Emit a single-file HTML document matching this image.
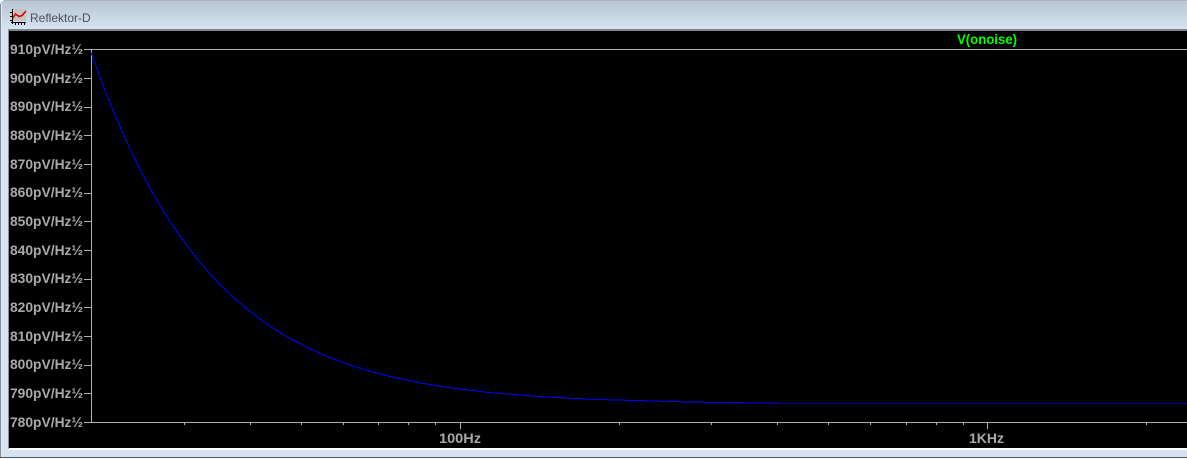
<!DOCTYPE html>
<html>
<head>
<meta charset="utf-8">
<style>
html,body{margin:0;padding:0;background:#fff;}
#w{position:relative;width:1187px;height:459px;overflow:hidden;background:#fff;font-family:"Liberation Sans",sans-serif;}
#frame{position:absolute;left:0;top:0;width:1187px;height:458px;border-top-left-radius:5px;background:linear-gradient(#b9c7d5 0,#c3d0dd 12px,#d6e3f1 29px,#d6e3f1 100%);}
#edge{position:absolute;left:0;top:4px;width:1px;height:454px;background:#7f8a94;}
#edge2{position:absolute;left:4px;top:0;width:1183px;height:1px;background:#aab4be;}
#edge3{position:absolute;left:1px;top:4px;width:1px;height:453px;background:#e4edf5;}
#bot{position:absolute;left:0;top:457px;width:1187px;height:1px;background:#555;}
#cl{position:absolute;left:8px;top:29px;width:1179px;height:421px;background:#fff;}
#cl2{position:absolute;left:8px;top:29px;width:1179px;height:2px;background:#7d848b;}
#cl3{position:absolute;left:8px;top:29px;width:1px;height:420px;background:#8c9399;}
#plot{position:absolute;left:9px;top:31px;width:1178px;height:417px;background:#000;}
#title{position:absolute;left:30px;top:11px;font-size:12px;line-height:14px;color:#47505c;}
svg{position:absolute;left:0;top:0;}
</style>
</head>
<body>
<div id="w">
<div id="frame"></div><div id="edge"></div><div id="edge2"></div><div id="edge3"></div><div id="bot"></div>
<div id="cl"></div><div id="plot"></div><div id="cl2"></div><div id="cl3"></div>
<div id="title">Reflektor-D</div>
<svg width="1187" height="459" viewBox="0 0 1187 459">
<g shape-rendering="crispEdges">
<rect x="13" y="9" width="13" height="12" fill="#c4c4c4"/>
<path d="M12.5 9v15M10 12.5h2M10 16.5h2M10 20.5h2M11 22.5h15M15.5 22v3M18.5 22v3M21.5 22v3M24.5 22v3" stroke="#000" fill="none"/>
</g>
<path d="M13 18L15.5 14L19 16.5L22 15.5L26 11" stroke="#e00000" stroke-width="1.6" fill="none"/>
<g shape-rendering="crispEdges" stroke="#b0b0b0" fill="none">
<path d="M91.5 49.5V422.5M84 49.5H1187M84 422.5H1187"/>
<path d="M84 78.5H91M84 107.5H91M84 135.5H91M84 164.5H91M84 193.5H91M84 221.5H91M84 250.5H91M84 279.5H91M84 307.5H91M84 336.5H91M84 365.5H91M84 393.5H91"/>
<path d="M184.5 422V425M250.5 422V425M301.5 422V425M343.5 422V425M378.5 422V425M408.5 422V425M435.5 422V425M460.5 422V429M619.5 422V425M711.5 422V425M777.5 422V425M828.5 422V425M870.5 422V425M906.5 422V425M936.5 422V425M963.5 422V425M987.5 422V429M1146.5 422V425"/>
</g>
<polyline fill="none" stroke="#0000ff" stroke-width="1" shape-rendering="crispEdges" points="91,52.4 101,79.9 111,105.5 121,129.1 131,151.1 141,171.2 151,189.9 161,207.1 171,222.9 181,237.6 191,251.1 201,263.5 211,275 221,285.5 231,295.2 241,304.1 251,312.3 261,319.8 271,326.8 281,333.2 291,339 311,349.4 331,358.1 351,365.4 371,371.5 391,376.7 421,383.1 451,387.9 491,392.7 541,396.7 591,399.3 691,402.1 780,403.2"/>
<path d="M780 403.5H1187" stroke="#00009c" stroke-width="1" fill="none" shape-rendering="crispEdges"/>
<g font-family="'Liberation Sans',sans-serif" font-size="14" font-weight="bold" fill="#a9a9a9">
<text x="10" y="54" textLength="73" lengthAdjust="spacingAndGlyphs">910pV/Hz½</text>
<text x="10" y="83" textLength="73" lengthAdjust="spacingAndGlyphs">900pV/Hz½</text>
<text x="10" y="111" textLength="73" lengthAdjust="spacingAndGlyphs">890pV/Hz½</text>
<text x="10" y="140" textLength="73" lengthAdjust="spacingAndGlyphs">880pV/Hz½</text>
<text x="10" y="169" textLength="73" lengthAdjust="spacingAndGlyphs">870pV/Hz½</text>
<text x="10" y="197" textLength="73" lengthAdjust="spacingAndGlyphs">860pV/Hz½</text>
<text x="10" y="226" textLength="73" lengthAdjust="spacingAndGlyphs">850pV/Hz½</text>
<text x="10" y="255" textLength="73" lengthAdjust="spacingAndGlyphs">840pV/Hz½</text>
<text x="10" y="283" textLength="73" lengthAdjust="spacingAndGlyphs">830pV/Hz½</text>
<text x="10" y="312" textLength="73" lengthAdjust="spacingAndGlyphs">820pV/Hz½</text>
<text x="10" y="341" textLength="73" lengthAdjust="spacingAndGlyphs">810pV/Hz½</text>
<text x="10" y="369" textLength="73" lengthAdjust="spacingAndGlyphs">800pV/Hz½</text>
<text x="10" y="398" textLength="73" lengthAdjust="spacingAndGlyphs">790pV/Hz½</text>
<text x="10" y="427" textLength="73" lengthAdjust="spacingAndGlyphs">780pV/Hz½</text>
<text x="439" y="443" textLength="42" lengthAdjust="spacingAndGlyphs">100Hz</text>
<text x="969" y="443" textLength="35" lengthAdjust="spacingAndGlyphs">1KHz</text>
<text x="957" y="44" fill="#00ff00" textLength="60" lengthAdjust="spacingAndGlyphs">V(onoise)</text>
</g>
</svg>
</div>
</body>
</html>
